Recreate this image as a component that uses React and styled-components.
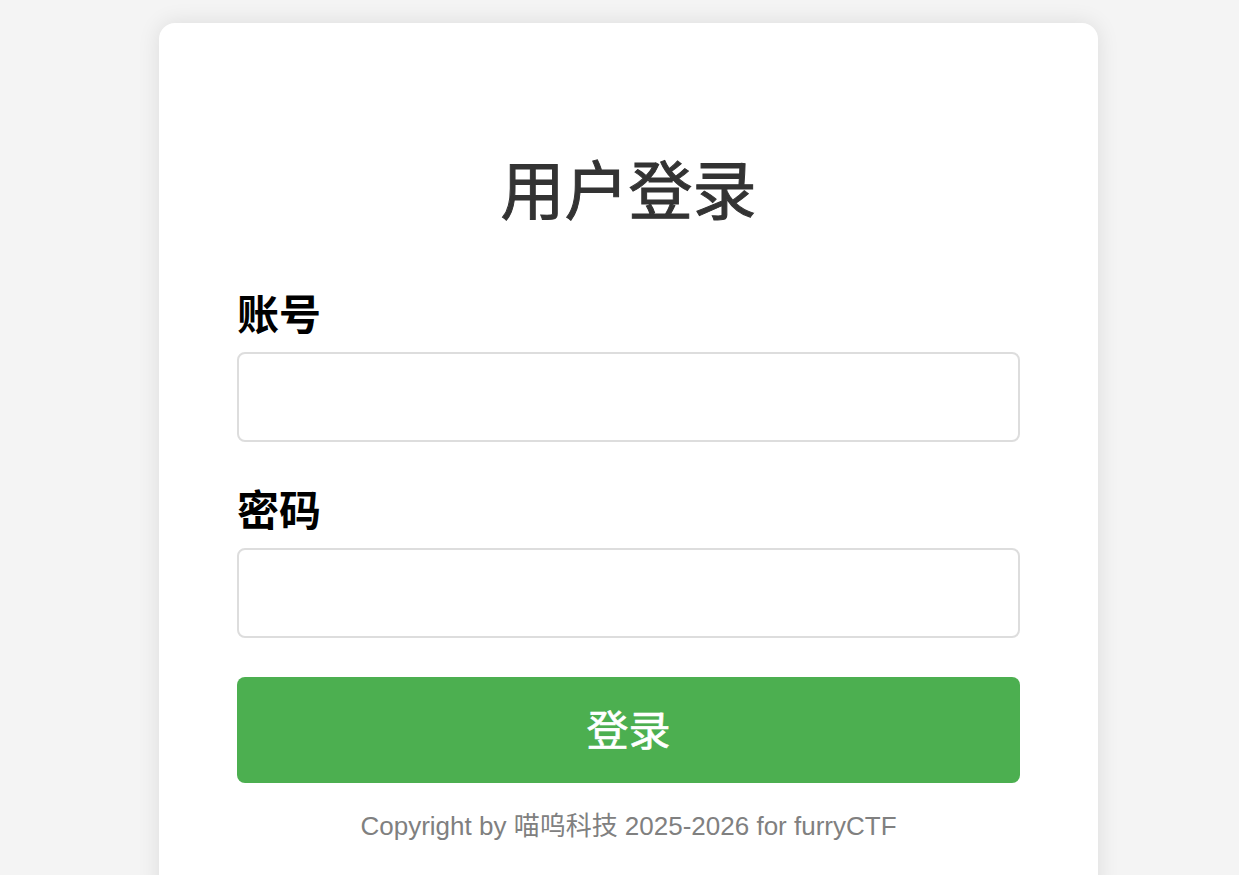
import React from 'react'
import styled, { createGlobalStyle } from 'styled-components'

const GlobalStyle = createGlobalStyle`
  html, body {
    margin: 0;
    padding: 0;
    background: #f4f4f4;
    font-family: "Liberation Sans", "Noto Sans CJK SC", sans-serif;
  }
  body {
    overflow: hidden;
  }
`

const Page = styled.div`
  min-height: 875px;
  padding-top: 23px;
  padding-left: 159px;
  box-sizing: border-box;
`

const Card = styled.div`
  width: 939px;
  box-sizing: border-box;
  background: #fff;
  border-radius: 16px;
  box-shadow: 0 0 22px rgba(0, 0, 0, 0.1);
  padding: 125px 78px 60px;
`

const Title = styled.h1`
  margin: 0 0 62px;
  font-family: "Noto Sans CJK SC", sans-serif;
  font-size: 64px;
  line-height: 77px;
  font-weight: 400;
  -webkit-text-stroke: 1px #333;
  color: #333;
  text-align: center;
`

const Field = styled.div`
  display: flex;
  flex-direction: column;
  gap: 15px;
  margin-bottom: ${p => p.$last ? '39px' : '41px'};
`

const Label = styled.label`
  font-family: "Noto Sans CJK SC", sans-serif;
  font-size: 42px;
  line-height: 50px;
  font-weight: 700;
  color: #000;
`

const Input = styled.input`
  height: 90px;
  box-sizing: border-box;
  border: 2px solid #ddd;
  border-radius: 8px;
  padding: 0 20px;
  font-size: 30px;
  outline: none;
  background: #fff;
`

const Button = styled.button`
  width: 100%;
  height: 106px;
  border: none;
  border-radius: 8px;
  background: #4caf50;
  color: #fff;
  font-family: "Noto Sans CJK SC", sans-serif;
  font-size: 42px;
  font-weight: 400;
  -webkit-text-stroke: 0.6px #fff;
  padding: 0 0 5px;
  cursor: pointer;
`

const Footer = styled.p`
  margin: 28px 0 0;
  font-size: 26px;
  line-height: 31px;
  color: #808080;
  text-align: center;
`

const App = () => {
  return (
    <Page>
      <GlobalStyle />
      <Card>
        <Title>用户登录</Title>
        <form onSubmit={e => e.preventDefault()}>
          <Field>
            <Label>账号</Label>
            <Input type="text" />
          </Field>
          <Field $last>
            <Label>密码</Label>
            <Input type="password" />
          </Field>
          <Button type="submit">登录</Button>
        </form>
        <Footer>Copyright by 喵呜科技 2025-2026 for furryCTF</Footer>
      </Card>
    </Page>
  )
}

export default App
